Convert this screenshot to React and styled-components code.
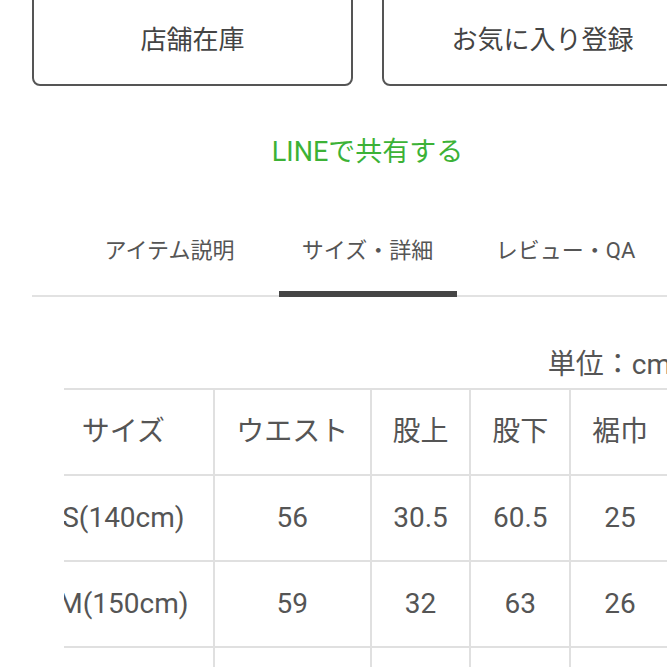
import React from 'react'
import styled, { createGlobalStyle } from 'styled-components'

const Global = createGlobalStyle`
html, body {
  margin: 0;
  padding: 0;
  overflow: hidden;
  background: #fff;
}
body {
  font-family: Roboto, "Noto Sans CJK JP", sans-serif;
  color: #555;
}
`

const Page = styled.div`
width: 735px;
`

const Actions = styled.div`
display: flex;
gap: 29px;
padding: 0 32px;
margin-top: -12px;
`

const ActionBtn = styled.button`
flex: 1;
box-sizing: content-box;
height: 94px;
border: 2px solid #555;
border-radius: 8px;
background: #fff;
color: #444;
font-family: inherit;
font-size: 26px;
padding: 0;
`

const Share = styled.div`
margin-top: 46px;
height: 40px;
line-height: 40px;
text-align: center;
font-size: 27px;
color: #3cb236;
`

const TabBar = styled.div`
display: flex;
justify-content: center;
margin: 64px 32px 0;
border-bottom: 2px solid #e2e2e2;
`

const Tab = styled.div`
width: 178px;
margin: 0 10px -2px;
padding-bottom: 25px;
line-height: 30px;
text-align: center;
font-size: 22px;
color: #555;
border-bottom: 6px solid ${p => (p.$active ? '#454545' : 'transparent')};
`

const Section = styled.div`
padding: 0 64px;
`

const Unit = styled.div`
margin-top: 52px;
line-height: 32px;
text-align: right;
font-size: 28px;
color: #555;
`

const Scroller = styled.div`
margin-top: 7px;
overflow: hidden;
`

const Table = styled.table`
margin-left: -32px;
border-collapse: separate;
border-spacing: 0;
table-layout: fixed;
`

const Cell = styled.td`
box-sizing: border-box;
width: ${p => p.$w}px;
padding: 0;
line-height: 84px;
text-align: center;
font-size: 28px;
color: #555;
white-space: nowrap;
border-right: 2px solid #e0e0e0;
border-bottom: 2px solid #e0e0e0;
tr:first-child > & {
  border-top: 2px solid #e0e0e0;
}
&:first-child {
  border-left: 2px solid #e0e0e0;
}
`

const widths = [183, 157, 100, 100, 100]

const rows = [
  ['サイズ', 'ウエスト', '股上', '股下', '裾巾'],
  ['S(140cm)', '56', '30.5', '60.5', '25'],
  ['M(150cm)', '59', '32', '63', '26'],
  ['L(160cm)', '62', '33.5', '65.5', '27'],
]

const App = () => {
  return <Page>
    <Global />
    <Actions>
      <ActionBtn>店舗在庫</ActionBtn>
      <ActionBtn>お気に入り登録</ActionBtn>
    </Actions>
    <Share>LINEで共有する</Share>
    <TabBar>
      <Tab>アイテム説明</Tab>
      <Tab $active>サイズ・詳細</Tab>
      <Tab>レビュー・QA</Tab>
    </TabBar>
    <Section>
      <Unit>単位：cm</Unit>
      <Scroller>
        <Table>
          <tbody>
            {rows.map((r, i) => (
              <tr key={i}>
                {r.map((c, j) => <Cell key={j} $w={widths[j]}>{c}</Cell>)}
              </tr>
            ))}
          </tbody>
        </Table>
      </Scroller>
    </Section>
  </Page>
}

export default App
